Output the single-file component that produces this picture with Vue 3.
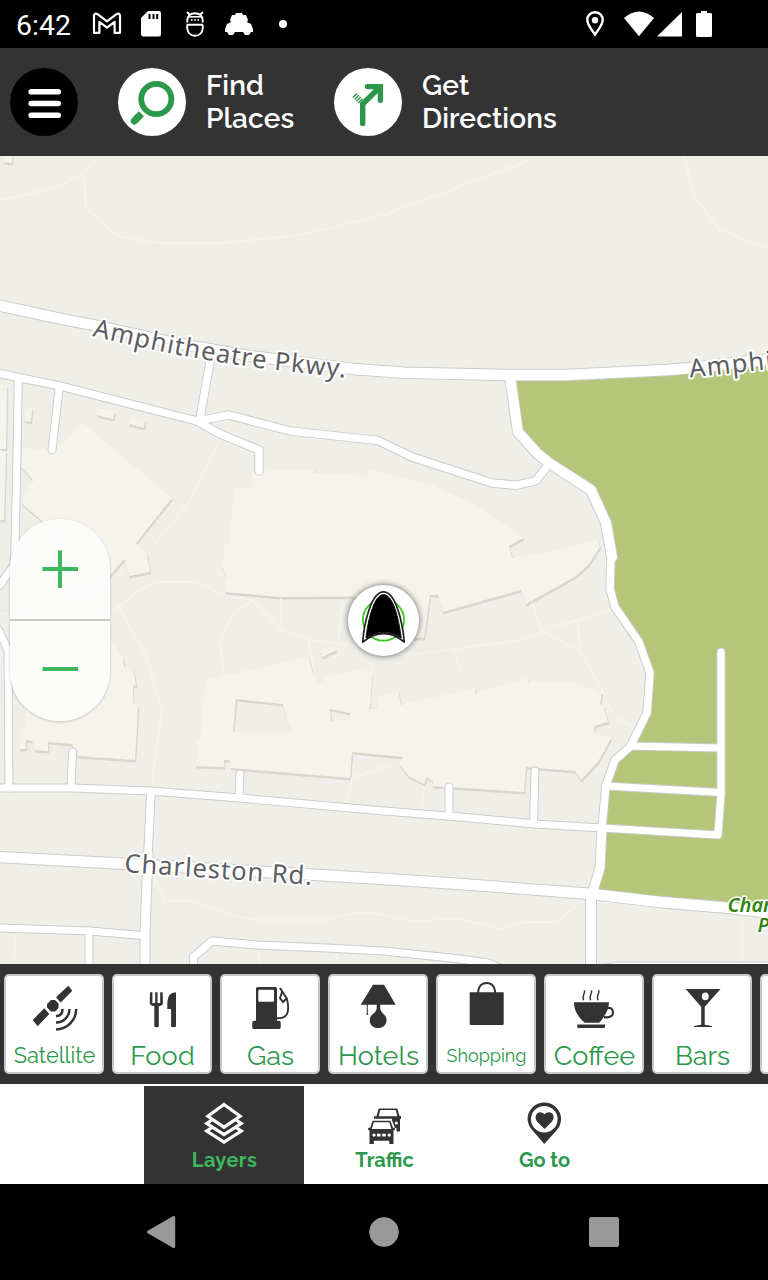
<script setup>
const roads = [
  { w: 7.4, d: 'M0 373.7L60 386L197 421L220 434L259 450V471' },
  { w: 7.4, d: 'M197 421L229 415L290 431L378 440.5L412 457L492 483L516 485.3L536 480.7L549 464' },
  { w: 7.4, d: 'M210 362L200 418' },
  { w: 7, d: 'M18.3 378L17 456L15 547L14 565L0 585' },
  { w: 7, d: 'M59 389L52 450' },
  { w: 7, d: 'M-2 629L8 650L9 788' },
  { w: 7, d: 'M72.5 752L71 786' },
  { w: 7, d: 'M240 774L239 796' },
  { w: 7, d: 'M449 787V815' },
  { w: 7, d: 'M535 771L533.5 823' },
  { w: 7.2, d: 'M0 788H73L150 791L240 798L384 811L460 817L535 824L602 828L718 835L721 793V652' },
  { w: 7, d: 'M630 746L721 748' },
  { w: 7, d: 'M606 786L721 792.5' },
  { w: 10, d: 'M510 376L518 432L537 453L549 463L591 490L606 523L612 557' },
  { w: 7.5, d: 'M611 555L610 589L615 607L639 642L650 673L647 713L630 747L615 760L606 785L602 828' },
  { w: 9, d: 'M602 828L600 868L592 894' },
  { w: 7.6, d: 'M151 791L148 853' },
  { w: 9, d: 'M148 853L145 933V968' },
  { w: 7, d: 'M-2 928L90 931L142 935.5M89 932V968' },
  { w: 7.2, d: 'M193.5 968V957L212 941L257 945L327 948L384 951L460 959L488 963L505 970' },
  { w: 10, d: 'M591 894V968' },
  { w: 8, d: 'M600 970L617 966.5H770' },
  { w: 10.4, d: 'M-5 304.5L57 318L93 325L170 342L250 356L353 369L404 372.7L507 375H567L667 370L691 368L770 359' },
  { w: 10.4, d: 'M-3 857L110 863L310 874.5L384 879L460 884L592 894L660 902L730 908L770 913' }
]
const buildings = [
  'M82 422L172 498L136 543L147 554L150 572L129 576L124 559L108 578L80 597L48 565L62 538L21 503L33 480L21 467L22 447L55 452Z',
  'M40 640H110L115 645L123 657L124 667L133 668L136 685L133 686V703L138 706L135 760L77 756L72 744L48 742V751L35 750L32 741L26 740V749L20 749V729L25 728L24 706Z',
  'M253 472L314 469L315 473L368 476V470L427 483L467 501L480 508L523 538L509 546L512 558L557 550L597 539L600 547L588 565L576 576L526 604L521 590L460 607L443 612L438 595H430L424 638H400L353 596.5L280 597L225 592L227 577L222 567L225 543H229L234 488H252Z',
  'M205 680L308 657L316 683L325 681V677L362 668L372 672L369 709H378L377 697L398 690L401 705L475 688L476 693L527 678L528 682H573L602 693L600 704L603 706L608 722L594 726V732L611 738L598 762L581 780L575 771L526 767L524 792L480 789L433 786V782L427 777L424 784L410 777L399 765L403 757L352 752L350 778L231 768L230 760H224V767L196 766L197 739H200ZM236 699L283 704L291 733L233 732ZM330 709L350 713V719L331 722Z',
  'M320 651L333 646L336 651L330 653L323 657Z',
  'M0 384L7 386L6 449H0Z', 'M0 450L6 452L4 520H0Z',
  'M26 406L32 408L31 422L25 421Z', 'M97 408L115 412L113 419L97 415Z',
  'M130 418L145 421L144 428L129 424Z', 'M4 155H12V163L4 162Z'
]
const paths = [
  'M0 200L27 195L62 184L84 173L97 157M84 173L86 208L117 236L157 243H219L295 236L384 215L410 205L530 160',
  'M684 156L694 196L720 230L770 249',
  'M220 439L203 472L192 498L153 546',
  'M0 613L80 622L119 607L136 592L157 582H192L208 586L219 595L252 600L231 617L220 643L224 677',
  'M119 607L145 654L162 708L151 790',
  'M252 600L281 630L308 639L345 645L410 655L460 648L522 640L542 631L612 609M532 602L542 631L580 652L602 689L613 716L635 728M578 620L580 652M453 650L462 675',
  'M281 598V630M343 600L338 645M308 639L316 682M373 662L369 708M357 656L353 630',
  'M347 803L352 778L392 764M422 810L423 786',
  'M152 873L165 901H192L232 915L256 920H328L355 913H372L410 921L460 919L502 929L525 922H557L590 894',
  'M16 933L14 960M258 950L260 966M335 950L340 966M742 914V961'
]
const categories = [
  { name: 'Satellite', size: 21.8, track: 0 }, { name: 'Food', size: 27, track: 0.2 },
  { name: 'Gas', size: 27, track: 0 }, { name: 'Hotels', size: 27, track: 0.1 },
  { name: 'Shopping', size: 18, track: 0 }, { name: 'Coffee', size: 27, track: 0 },
  { name: 'Bars', size: 27, track: 0 }
]
</script>

<template>
  <div class="screen">
    <header class="status">
      <span class="clock">6:42</span>
      <div class="left-icons">
        <svg viewBox="91 0 32 48" fill="none" stroke="#fff"><path d="M94 32.8V15.5Q94.5 12.5 97.5 14.2L107 21.3L116.5 14.2Q119.5 12.5 120 15.5V32.8H114.6V21.8L107 27.6L99.4 21.8V32.8Z" stroke-width="2.2" stroke-linejoin="round"/></svg>
        <svg viewBox="135 0 32 48"><path d="M148 11H159Q161 11 161 13V34Q161 36.5 159 36.5H143Q141 36.5 141 34V18Z" fill="#fff"/><path d="M149.5 14V19M153.5 14V19M157.2 14V19" stroke="#000" stroke-width="2"/></svg>
        <svg viewBox="179 0 32 48"><path d="M187.3 22.5V20Q188 13.4 195 13.2Q202 13.4 202.7 20V22.5M186.5 24.8H203M202.8 24.8V28Q202 35.8 195 35.8Q188 35.8 187.2 28V25.5M187 12L190 15M203 12L200 15" fill="none" stroke="#fff" stroke-width="1.9"/><path d="M188.5 16.8H201.5" stroke="#fff" stroke-width="1.6"/><circle cx="191.8" cy="20" r=".9" fill="#fff"/><circle cx="195" cy="20" r=".9" fill="#fff"/><circle cx="198.2" cy="20" r=".9" fill="#fff"/></svg>
        <svg viewBox="223 0 32 48"><path d="M236 13H242L243 15H246L248 20L247 22L251 24L253 29V32H251L249 35H245L243 32H235L233 35H229L227 32H225V29L227 24L231 22L230 20L232 15H235Z" fill="#fff"/></svg>
        <svg viewBox="267 0 32 48"><circle cx="283" cy="24" r="4.1" fill="#fff"/></svg>
      </div>
      <div class="right-icons">
        <svg viewBox="579 0 32 48"><path d="M595 12.3C590 12.3 587.3 16 587.3 20C587.3 25 592 30 595 34.5C598 30 602.7 25 602.7 20C602.7 16 600 12.3 595 12.3Z" fill="none" stroke="#fff" stroke-width="2.4"/><circle cx="595" cy="20.3" r="3.2" fill="#fff"/></svg>
        <svg class="wifi" viewBox="623 0 32 48"><path d="M624 18Q639 5 654 18L639 36.3Z" fill="#fff"/></svg>
        <svg viewBox="655 0 32 48"><path d="M682 12V36.5H657Z" fill="#fff"/></svg>
        <svg class="battery" viewBox="688 0 32 48"><path d="M701 11H707V13H710.5Q712 13 712 14.5V35.5Q712 37 710.5 37H697.5Q696 37 696 35.5V14.5Q696 13 697.5 13H701Z" fill="#fff"/></svg>
      </div>
    </header>

    <nav class="toolbar">
      <svg class="round" viewBox="10 68 68 68"><circle cx="44" cy="102" r="34"/><path d="M31.2 91.8H58.2M31.2 103.5H58.2M31.2 115.2H58.2" stroke="#fff" stroke-width="5.6" stroke-linecap="round"/></svg>
      <div class="action">
        <svg class="round" viewBox="118 68 68 68"><circle cx="152" cy="102" r="34" fill="#fff"/><circle cx="156.3" cy="99" r="15.1" fill="none" stroke="#2c984b" stroke-width="5.8"/><path d="M134.3 121L138 117.3" stroke="#2c984b" stroke-width="7" stroke-linecap="round"/><path d="M136 119.3L141.5 113.8" stroke="#2c984b" stroke-width="7"/></svg>
        <span>Find<br>Places</span>
      </div>
      <div class="action second">
        <svg class="round" viewBox="334 68 68 68"><circle cx="368" cy="102" r="34" fill="#fff"/><path d="M362.7 123.4V104L379.5 87.5M367.5 86.6H380.4V100.3" fill="none" stroke="#2c984b" stroke-width="5.4" stroke-linecap="round"/><path d="M354.5 95L361.5 102" stroke="#2c984b" stroke-width="6" stroke-dasharray="1.4 1.1"/></svg>
        <span>Get<br>Directions</span>
      </div>
    </nav>

    <main class="map">
      <svg class="canvas" viewBox="0 156 768 808">
        <rect y="156" width="768" height="808" fill="#efeee9"/>
        <path d="M511 376H567L768 362V914L660 902L592 894L600 868L602 828L606 785L615 760L630 747L647 713L650 673L639 642L615 607L610 589L612 557L606 523L591 490L537 453L518 432Z" fill="#b5c67b"/>
        <g fill="#dad6cb" fill-rule="evenodd" transform="translate(.8 2)"><path v-for="d in buildings" :key="d" :d="d" stroke="#dad6cb" stroke-width="1"/></g>
        <g fill="#f6f3ec" fill-rule="evenodd"><path v-for="d in buildings" :key="d" :d="d"/></g>
        <g fill="none" stroke="#f5f3ee" stroke-width="1.7"><path v-for="d in paths" :key="d" :d="d"/></g>
        <g fill="none" stroke="#cbcbca" stroke-linecap="round" stroke-linejoin="round"><path v-for="r in roads" :key="r.d" :d="r.d" :stroke-width="r.w + 1.9"/></g>
        <g fill="none" stroke="#fff" stroke-linecap="round" stroke-linejoin="round"><path v-for="r in roads" :key="r.d" :d="r.d" :stroke-width="r.w"/></g>
        <defs>
          <path id="amphi-west" d="M92 336Q190 360 276 370L360 379.5"/>
          <path id="charleston" d="M124 872L320 885.5"/>
          <path id="amphi-east" d="M690 377.5L780 368L980 340"/>
        </defs>
        <g class="road-label">
          <text textLength="257"><textPath href="#amphi-west" textLength="257">Amphitheatre Pkwy.</textPath></text>
          <text textLength="188"><textPath href="#charleston" textLength="188">Charleston Rd.</textPath></text>
          <text textLength="262"><textPath href="#amphi-east" textLength="262">Amphitheatre Pkwy.</textPath></text>
        </g>
        <g class="park-label"><text x="727.5" y="911.5">Charleston</text><text x="757.5" y="931.5">Park</text></g>
      </svg>
      <div class="zoom">
        <button aria-label="Zoom in"><svg viewBox="0 0 100 100"><path d="M32.5 50H68M50 31.5V69"/></svg></button>
        <button aria-label="Zoom out"><svg viewBox="0 0 100 100"><path d="M32.5 48H68"/></svg></button>
      </div>
      <svg class="marker" viewBox="348 585 71 71">
        <circle cx="383.5" cy="620.5" r="35.5" fill="#fff"/>
        <circle cx="383.5" cy="620" r="20.6" fill="none" stroke="#34cc1c" stroke-width="1.7"/>
        <path d="M362.7 642C364 624 371 591.8 383.5 591.8C396 591.8 402.5 623 404.3 642Q384 625 362.7 642Z" fill="#fff" stroke="#222" stroke-width="1.7" stroke-linejoin="round"/>
        <path d="M366 638C368 620 374 594.6 383.5 594.6C393 594.6 398.8 618 401.2 638Q384 626.5 366 638Z" stroke="#111" stroke-width="1"/>
      </svg>
    </main>

    <section class="categories">
      <div v-for="(c, i) in categories" :key="c.name" class="card">
        <svg viewBox="2 2 96 66" fill="#333">
          <template v-if="i === 0">
            <path d="M64.3 11.7L68.3 16.7L56.7 28.5L52 23.3ZM40.3 34.3L45.3 40L33.7 52.3L28.7 46ZM47 26H51L54.5 29.5V34L51 37.5H47L43 33.5V30Z"/>
            <g fill="none" stroke="#333" stroke-width="2.5"><path d="M58.5 35Q58.5 42 52 42M65.5 35A13.5 13.5 0 0 1 52 48.5M72.2 35A20.5 20.5 0 0 1 52 55.5"/></g>
          </template>
          <template v-else-if="i === 1">
            <path d="M38 18.3H40.4V29H43.2V18.3H45.5V29H48.2V18.3H50.6L51 29Q51 31.5 46.8 32.3V52Q46.8 53.3 44.5 53.3Q42.3 53.3 42.3 52V32.3Q37.7 31.5 37.7 29ZM64 18.3V52Q64 53.3 61.6 53.3Q59.1 53.3 59.1 52V35H55.3V29Q55.5 18.3 64 18.3Z"/>
          </template>
          <template v-else-if="i === 2">
            <path fill-rule="evenodd" d="M37.5 13H55.5Q57 13 57 14.5V46.7H59Q60.7 46.7 60.7 49V53.5Q60.7 55 59 55H34Q32.3 55 32.3 53.5V49Q32.3 46.7 34 46.7H36V14.5Q36 13 37.5 13ZM39.5 15.7Q38.3 15.7 38.3 17V26.5Q38.3 27.7 39.5 27.7H53Q54 27.7 54 26.5V17Q54 15.7 53 15.7Z"/>
            <path d="M60 14L67 25Q69.5 35 66.7 40.5Q64 44.5 57 44.3M62 18L60 24L63 28L66 25" fill="none" stroke="#333" stroke-width="1.9"/>
          </template>
          <template v-else-if="i === 3">
            <path d="M45 10.7H56L67.7 30.7H52.2V35Q53 37.5 55.5 40A7.8 7.8 0 0 1 54 53.3L52 54H48L46 53.3A7.8 7.8 0 0 1 45 40Q48 37.5 48.7 35V30.7H32.7Z"/><path d="M39.3 30V39" stroke="#333"/><circle cx="39.3" cy="40" r="1"/>
          </template>
          <template v-else-if="i === 4">
            <path d="M33.7 18.3H67.7V50Q67.7 51 66.7 51H34.7Q33.7 51 33.7 50Z"/><path d="M42.2 19V17Q43.5 9 50.7 9Q57.8 9 59 17V19" fill="none" stroke="#333" stroke-width="2"/>
          </template>
          <template v-else-if="i === 5">
            <path d="M30 28.3H65Q64.8 35 61.5 40Q57.5 47 55 48.8H40.7Q37 46 33.5 40.5Q30 35 30 28.3ZM33.3 50.6H61V53Q60.8 54 59.7 54H34.7Q33.3 54 33.3 53Z"/>
            <path d="M63 34Q69 33 69 39Q68.6 44 60 43.2" fill="none" stroke="#333" stroke-width="2.2"/>
            <path d="M40.5 16.3C41.5 20 37.5 21 39.5 26.3M47.5 16.3C48.5 20 44.5 21 46.5 26.3M54.8 16.3C55.8 20 51.8 21 53.8 26.3" fill="none" stroke="#333" stroke-width="1.5"/>
          </template>
          <template v-else>
            <path d="M33.7 15H68.5L52.7 32.7V50.7L60 52V53H42V52L49.2 50.7V32.7Z"/><ellipse cx="53.3" cy="22.4" rx="3.4" ry="3.8" fill="#fff"/>
          </template>
        </svg>
        <span :style="{ fontSize: c.size + 'px', letterSpacing: c.track + 'px' }">{{ c.name }}</span>
      </div>
      <div class="card"></div>
    </section>

    <nav class="tabs">
      <div class="tab active">
        <svg viewBox="0 2 160 62" fill="none" stroke="#fff" stroke-width="3.2"><path d="M80 20.5L96.2 32.3L80 43.2L63.8 32.3ZM68 36L62.7 39.4L80 50.6L97.3 39.4L92 36M68 43.5L62.7 47L80 58.2L97.3 47L92 43.5"/></svg>
        <span class="spaced">Layers</span>
      </div>
      <div class="tab">
        <svg viewBox="0 2 160 62">
          <path d="M74.7 24.5H93.3L95.5 32H97V35H96V47.6H91V44H88V34.8H70V32.2H72.5Z" fill="#333"/>
          <path d="M76.3 26H91.7L93.3 32.2H74.8Z" fill="#fff"/>
          <circle cx="92.3" cy="39" r="1.5" fill="#fff"/>
          <path d="M68.3 35H87.4L91 44H92.5V48H65L66 44Z" fill="#fff"/>
          <path d="M68.5 36.7H86.5L89 43.8H90.8V46.3H89.5V60H85.3V56.7H69.8V60H65.5V46.3H64.2V43.8H66.2Z" fill="#333"/>
          <path d="M69.8 38.3H85.3L87.3 45H67.8Z" fill="#fff"/>
          <circle cx="70" cy="51.1" r="1.7" fill="#fff"/><circle cx="85.2" cy="51.1" r="1.7" fill="#fff"/><path d="M73 49.8H76.6V52.6H73ZM78.2 49.8H81.8V52.6H78.2Z" fill="#fff"/>
        </svg>
        <span>Traffic</span>
      </div>
      <div class="tab">
        <svg viewBox="0 2 160 62"><path d="M80.3 18.5A16.8 16.8 0 0 0 63.5 35.3Q64 42 69 47L80.3 60L92 47Q97 42 97.1 35.3A16.8 16.8 0 0 0 80.3 18.5Z" fill="#333"/><circle cx="80.3" cy="35.2" r="13.3" fill="#fff"/><path d="M80.5 45L73 37.5C70 33 72.5 28.3 76 28.3Q79 28.3 80.5 30.3Q82 28.3 85 28.3C89 28.3 91.5 33 88 37.5Z" fill="#333"/></svg>
        <span>Go to</span>
      </div>
    </nav>

    <footer class="system">
      <svg viewBox="0 0 40 40"><path d="M4.5 20L29.7 5.5V34.5Z" fill="#999" stroke="#999" stroke-width="3" stroke-linejoin="round"/></svg>
      <svg viewBox="0 0 40 40"><circle cx="20" cy="20" r="14.7" fill="#999"/></svg>
      <svg viewBox="0 0 40 40"><rect x="5" y="5" width="30" height="30" rx="2.5" fill="#999"/></svg>
    </footer>
  </div>
</template>

<style>
body { margin: 0; background: #000; }
</style>

<style scoped>
.screen { width: 768px; height: 1280px; overflow: hidden; display: flex; flex-direction: column; font-family: Raleway, Lato, sans-serif; }
svg { display: block; }
.status { height: 48px; flex: none; background: #000; display: flex; align-items: center; box-sizing: border-box; padding: 0 48px 0 16px; }
.clock { width: 75px; font: 28.5px/48px Roboto, sans-serif; color: #fff; padding-top: 3px; box-sizing: border-box; }
.left-icons, .right-icons { display: flex; }
.left-icons { gap: 12px; }
.right-icons { margin-left: auto; }
.status svg { width: 32px; height: 48px; }
.wifi { margin-left: 12px; }
.battery { margin-left: 1px; }
.toolbar { height: 108px; flex: none; background: #333; display: flex; align-items: center; padding-left: 10px; box-sizing: border-box; }
.round { width: 68px; height: 68px; flex: none; }
.action { margin-left: 40px; width: 176px; display: flex; gap: 20px; color: #fff; font-size: 28px; font-weight: 600; line-height: 33px; letter-spacing: .12px; }
.action span { padding-top: 1px; }
.second { width: 240px; }
.map { position: relative; height: 808px; flex: none; overflow: hidden; }
.canvas { width: 768px; height: 808px; }
.road-label { font: 25.5px "Noto Sans", "Open Sans", sans-serif; fill: #5c5d61; stroke: #fff; stroke-width: 4px; stroke-linejoin: round; paint-order: stroke; }
.park-label { font: italic 600 20px "Noto Sans", "Open Sans", sans-serif; fill: #2f850f; stroke: #fff; stroke-width: 3px; stroke-linejoin: round; paint-order: stroke; }
.zoom { position: absolute; left: 10px; top: 363px; width: 100px; height: 202px; border-radius: 50px; overflow: hidden; background: rgba(252, 252, 252, .95); box-shadow: 0 1px 3px rgba(0, 0, 0, .2); }
.zoom button { display: block; width: 100px; height: 100px; padding: 0; border: 0; background: none; }
.zoom button:first-child { height: 102px; border-bottom: 2px solid #cbcbc7; }
.zoom path { stroke: #3fb75f; stroke-width: 4; }
.marker { position: absolute; left: 348px; top: 429px; width: 71px; height: 71px; border-radius: 50%; box-shadow: 0 0 6px rgba(0, 0, 0, .6); }
.categories { height: 120px; flex: none; background: #333; display: flex; gap: 8px; padding: 10px 0 0 4px; box-sizing: border-box; overflow: hidden; }
.card { width: 100px; height: 100px; flex: none; box-sizing: border-box; border: 2px solid #c8c8c8; border-radius: 5px; background: #fff; text-align: center; }
.card svg { width: 96px; height: 66px; }
.card span { display: block; line-height: 28px; color: #2c984b; white-space: nowrap; padding-left: 1px; }
.tabs { height: 100px; flex: none; background: #fff; display: flex; padding: 2px 0 0 144px; box-sizing: border-box; }
.tab { width: 160px; height: 98px; text-align: center; color: #2c984b; font-size: 20px; font-weight: 700; line-height: 24px; }
.tab svg { width: 160px; height: 62px; }
.tab span { padding-left: 1px; }
.active { background: #333; color: #3fb75f; }
.spaced { letter-spacing: .4px; }
.system { height: 96px; flex: none; background: #000; display: flex; align-items: center; gap: 180px; padding-left: 144px; box-sizing: border-box; }
.system svg { width: 40px; height: 40px; }
</style>
